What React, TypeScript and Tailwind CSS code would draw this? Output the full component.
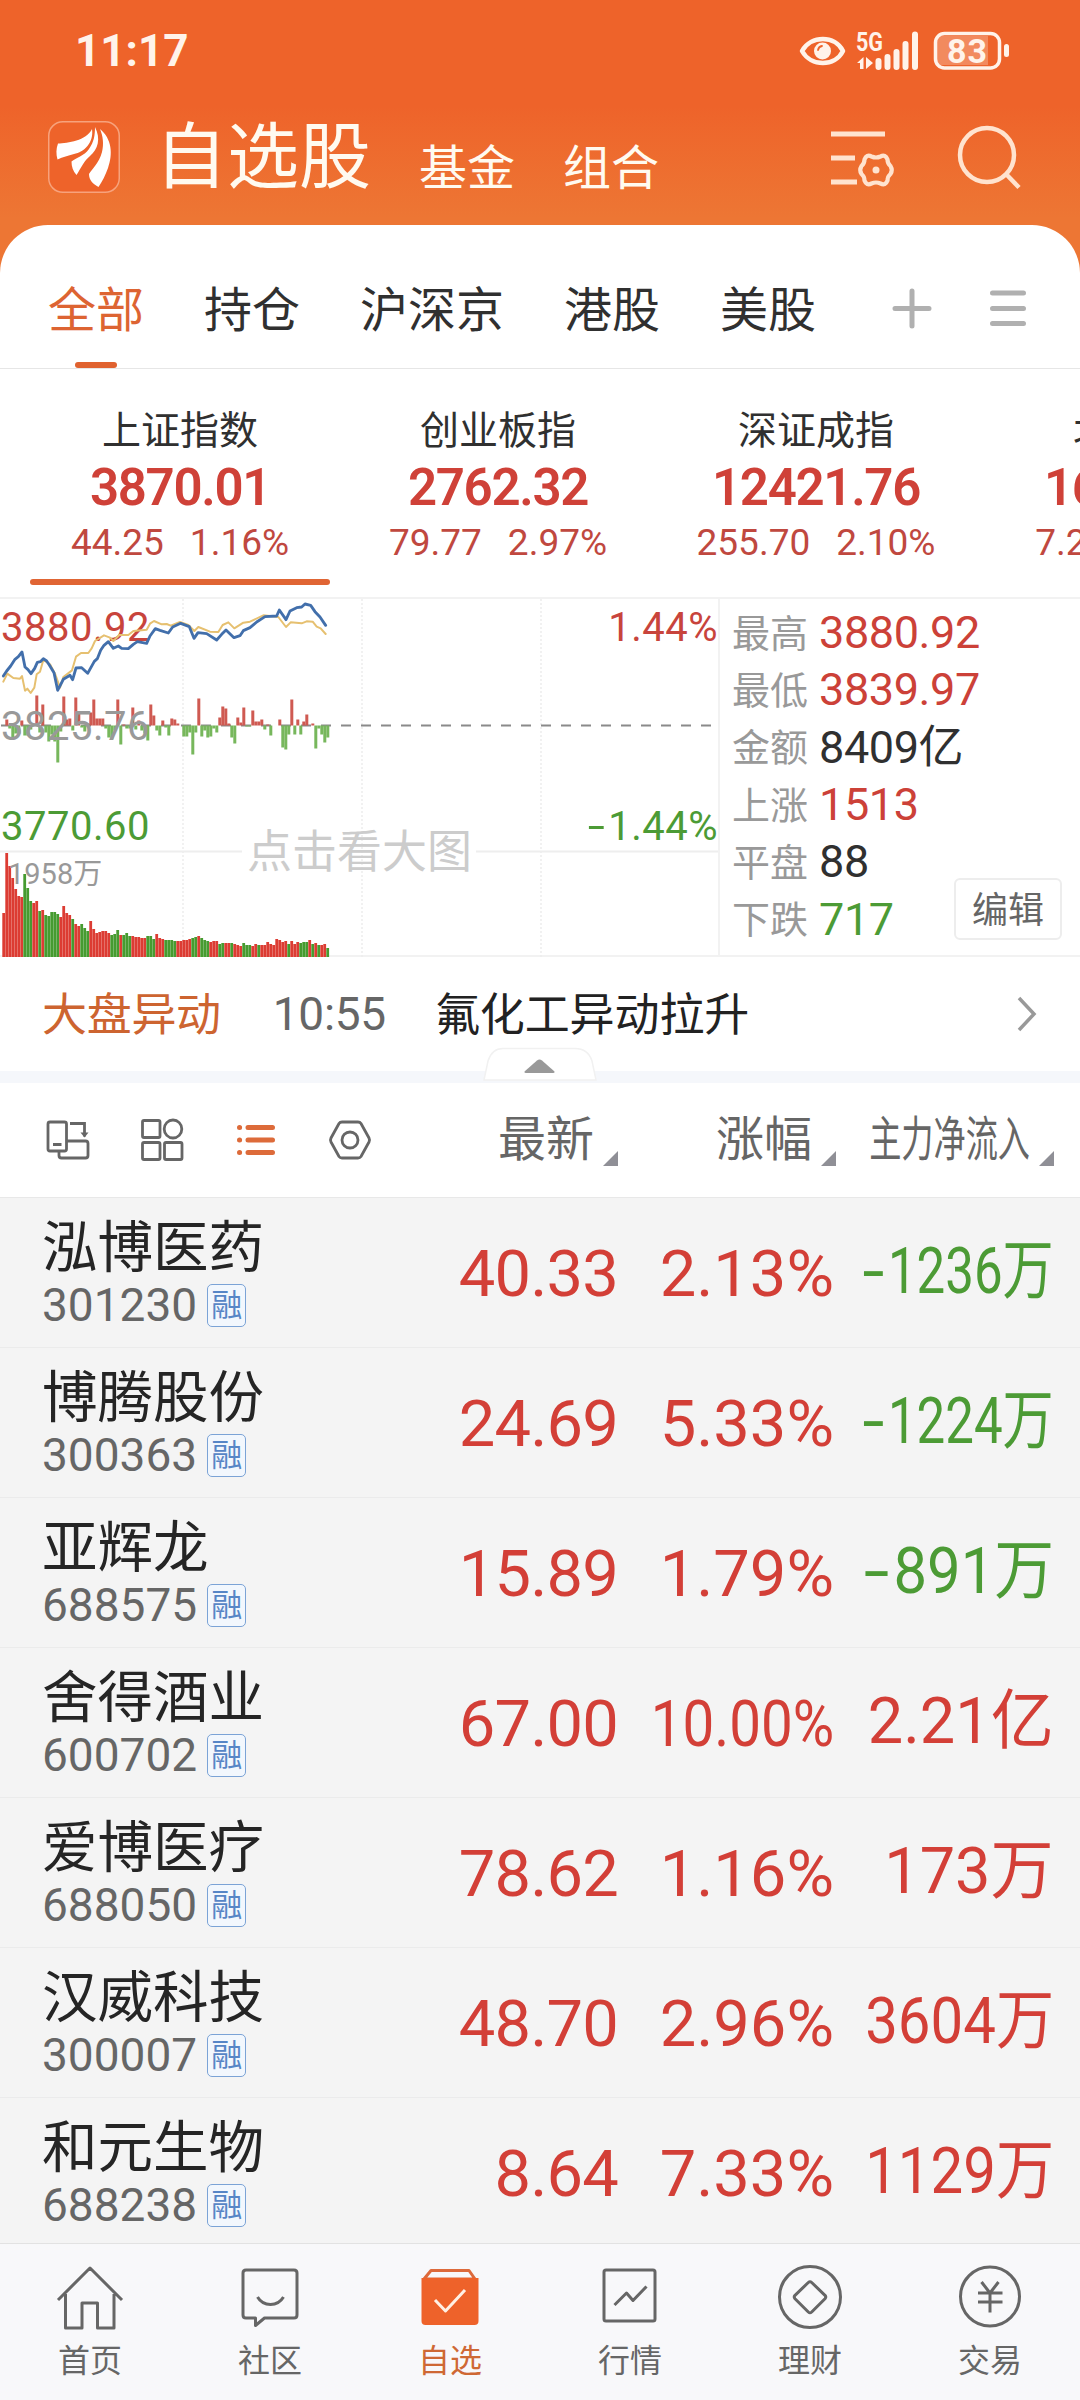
import React from 'react';
import clsx from 'clsx';

const tabs = ['全部', '持仓', '沪深京', '港股', '美股'];

const indexes = [
  { name: '上证指数', value: '3870.01', change: '44.25', pct: '1.16%' },
  { name: '创业板指', value: '2762.32', change: '79.77', pct: '2.97%' },
  { name: '深证成指', value: '12421.76', change: '255.70', pct: '2.10%' },
  { name: '北证50', value: '1600.82', change: '7.27', pct: '0.46%' },
];

const stats = [
  { label: '最高', value: '3880.92', color: 'text-[#cc4138]' },
  { label: '最低', value: '3839.97', color: 'text-[#cc4138]' },
  { label: '金额', value: '8409亿', color: 'text-[#303030]' },
  { label: '上涨', value: '1513', color: 'text-[#cc4138]' },
  { label: '平盘', value: '88', color: 'text-[#303030]' },
  { label: '下跌', value: '717', color: 'text-[#4c9b35]' },
];

const stocks = [
  { name: '泓博医药', code: '301230', price: '40.33', pct: '2.13%', flow: '-1236万', fit: 'scale-x-[0.785]' },
  { name: '博腾股份', code: '300363', price: '24.69', pct: '5.33%', flow: '-1224万', fit: 'scale-x-[0.785]' },
  { name: '亚辉龙', code: '688575', price: '15.89', pct: '1.79%', flow: '-891万', fit: 'scale-x-[0.92]' },
  { name: '舍得酒业', code: '600702', price: '67.00', pct: '10.00%', flow: '2.21亿', fit: 'scale-x-[0.97]' },
  { name: '爱博医疗', code: '688050', price: '78.62', pct: '1.16%', flow: '173万', fit: 'scale-x-[0.97]' },
  { name: '汉威科技', code: '300007', price: '48.70', pct: '2.96%', flow: '3604万', fit: 'scale-x-[0.895]' },
  { name: '和元生物', code: '688238', price: '8.64', pct: '7.33%', flow: '1129万', fit: 'scale-x-[0.895]' },
];

// per-minute volume, r = up, g = down
const volume = [
  44, 104, 91, 79, 68, 61, 60, 83, 69, 56, 54, 56, 46, 47, 42, 41, 45, 45, 43, 40, 51, 44, 42, 38, 33, 31, 33, 29, 26, 36,
  28, 24, 25, 26, 26, 24, 22, 23, 27, 22, 22, 24, 21, 21, 20, 20, 19, 19, 21, 21, 18, 23, 19, 18, 17, 17, 17, 16, 16, 16,
  17, 17, 18, 19, 20, 21, 19, 17, 16, 15, 16, 16, 13, 14, 14, 14, 14, 13, 12, 11, 14, 12, 12, 11, 13, 12, 12, 12, 15, 13,
  12, 18, 17, 15, 16, 13, 16, 13, 15, 14, 15, 15, 17, 13, 14, 12, 12, 13, 9,
];
const volumeDir =
  'rrrrrrrgggrrgrgggggrrrrgrrggg' + 'rrrrrrrgggrgggrrrrrgggrrrggggrrrrrggrgggrrrggrrgrrrgggrrgrrrrrrrrrgrrrgggrgrgrrggrgggggg';

// net money flow around the previous close, index -> signed height
const flow: Record<number, number> = {
  1: 6, 2: -3, 3: -13, 4: -8, 5: -8, 6: 5, 7: -10, 8: -10, 9: -4, 10: 2, 11: 30, 12: -7, 13: 21, 14: -7, 15: -16, 16: -9, 17: -16,
  18: -37, 19: -6, 20: 29, 21: 6, 22: 7, 23: -5, 24: 28, 25: 12, 26: -2, 27: -6, 28: 2, 29: 13, 30: 26, 31: 7, 32: 7, 33: 7,
  34: -3, 35: -12, 36: -14, 37: -5, 38: 26, 39: -19, 40: 1, 41: -3, 42: -3, 43: 18, 44: -4, 45: 5, 46: -5, 47: -8, 48: -15,
  49: 21, 50: 10, 51: -5, 52: -10, 53: 5, 54: -2, 55: -10, 56: 7, 57: 6, 58: 2, 60: -11, 61: -11, 62: -7, 63: -29, 64: -7,
  65: 27, 66: -11, 67: -5, 68: -12, 69: -11, 70: -3, 71: -7, 72: 8, 73: 19, 74: 17, 75: 2, 76: -12, 77: -18, 78: 8, 79: 3,
  80: 18, 81: -1, 82: -1, 83: 15, 84: 4, 85: 4, 86: 6, 87: -4, 88: 1, 89: -10, 92: 6, 93: -22, 94: -24, 95: -9, 96: 26,
  97: -9, 98: 6, 99: -9, 100: 4, 101: 11, 103: 2, 104: -23, 105: -3, 106: -9, 107: -17, 108: -12,
};

const priceLine =
  '10,255 20,240 32,225 45,205 55,197 66,183 75,228 84,236 93,248 104,232 112,214 121,212 130,203 140,210 148,222 162,245 173,298 190,265 210,253 218,266 228,231 245,230 263,247 283,211 292,203 302,178 312,163 325,152 340,172 355,165 365,172 385,173 400,160 412,152 440,157 450,135 466,113 480,118 505,126 518,108 542,97 568,107 582,142 594,125 620,128 650,147 665,130 678,117 702,140 720,134 730,119 750,110 770,93 795,77 830,75 838,57 858,86 870,60 890,50 905,48 915,39 932,43 945,62 960,78 977,103';
const avgLine =
  '10,272 22,248 40,261 60,263 66,255 75,299 82,293 92,306 103,290 110,250 120,242 130,207 150,220 165,248 180,290 190,258 216,238 228,197 243,186 265,186 275,172 285,150 312,133 330,140 340,150 358,132 385,132 400,120 440,116 450,98 462,90 485,100 500,99 512,104 540,93 565,102 583,120 595,108 630,122 655,123 668,102 685,94 703,112 730,95 750,92 790,73 835,78 858,108 872,94 905,97 920,91 938,92 950,107 962,112 977,129';

// the minus sign is drawn wider than the font's hyphen
function Signed({ text }: { text: string }) {
  if (text[0] !== '-') return <>{text}</>;
  return (
    <>
      <span className="mr-[0.07em] inline-block origin-right scale-x-[1.55]">-</span>
      {text.slice(1)}
    </>
  );
}

function StatusBar() {
  return (
    <div className="flex h-[102px] items-center justify-between pl-[75px] pr-[70px] text-[#fff3ea]">
      <span className="text-[44px] leading-none font-bold">11:17</span>
      <svg width="212" height="54" viewBox="798 24 212 54" fill="none" stroke="#fff3ea">
        <path d="M802 51C811 35 835 35 843 51C835 67 811 67 802 51Z" strokeWidth="4.5" strokeLinejoin="round" />
        <circle cx="822.5" cy="51" r="8.5" fill="#fff3ea" stroke="none" />
        <path d="M818 50a5 5 0 0 1 4-4" stroke="#ee632a" strokeWidth="1.8" strokeLinecap="round" />
        <text x="856" y="50.500" fill="#fff3ea" stroke="none" fontSize="25" fontWeight="700" textLength="27" lengthAdjust="spacingAndGlyphs">5G</text>
        <path d="M863.500 57v12h-3.500v-6h-3zM866 57v12l7-6z" fill="#fff3ea" stroke="none" />
        <path d="M878.500 61v6M887.500 57v10M896.500 52v15M905.500 44v23M915 34.500v32.500" strokeWidth="6" strokeLinecap="round" />
        <path d="M941 36h47v29h-47q-5 0-5-5V41q0-5 5-5z" fill="#f28a5e" stroke="none" />
        <rect x="935.500" y="33.500" width="64" height="34.500" rx="9" strokeWidth="3.500" />
        <path d="M1006.500 46.500v8" strokeWidth="5" strokeLinecap="round" />
        <text x="947" y="63" fill="#fff3ea" stroke="none" fontSize="34" fontWeight="700" textLength="40">83</text>
      </svg>
    </div>
  );
}

function TitleBar() {
  return (
    <div className="flex h-[107px] items-center pl-12 pr-[56px] text-[#fffaf0]">
      <svg className="mt-[3px]" width="72" height="72" viewBox="0 0 72 72">
        <rect x="0.750" y="0.750" width="70.500" height="70.500" rx="14" fill="#ee632a" stroke="#f7a27c" strokeWidth="1.500" />
        <path d="M44 8C46 22 36 31 26 33C20 34.500 15 36 9.500 38.500C8 33 8 28 10 22.500C20 22 38 20 44 8Z" fill="#fff" />
        <path d="M47 6C53 18 50 28 42 35C36 40 33 47 28.500 54C25 50 23.500 46 23.500 40.500C28 37 36 35 41 28C46 21 47 14 47 6Z" fill="#fff" />
        <path d="M52 8C64 18 65 33 60 47C57.500 54 54.500 60 50.500 66C45 63 41 59 41 53C44 48 51 42 54 31C56 23 55 15 52 8Z" fill="#fff" />
      </svg>
      <div className="ml-[35px] flex items-end pt-[5px] leading-none">
        <span className="text-[72px] leading-none">自选股</span>
        <span className="mb-[1px] ml-12 text-5xl leading-none">基金</span>
        <span className="mb-[1px] ml-12 text-5xl leading-none">组合</span>
      </div>
      <svg className="ml-auto" width="196" height="72" viewBox="828 119 196 72" fill="none" stroke="#ffe3cf">
        <path d="M831 133h54M831 157h24M831 181h26" strokeWidth="5" />
        <path
          d="M871.500 155.500Q876 157.500 880.500 155.500Q885.500 153 887.500 158.500Q887.500 162.500 890.500 165Q893 169 890.500 173Q887.500 175.500 887.500 179.500Q885.500 185 880.500 182.500Q876 180.500 871.500 182.500Q866.500 185 864.500 179.500Q864.500 175.500 861.500 173Q859 169 861.500 165Q864.500 162.500 864.500 158.500Q866.500 153 871.500 155.500Z"
          strokeWidth="4.200"
        />
        <circle cx="876" cy="169" r="3.500" fill="#ffe3cf" stroke="none" />
        <ellipse cx="987" cy="154" rx="27" ry="27" strokeWidth="4.500" />
        <path d="M1006 173l13 13.500" strokeWidth="4.500" />
      </svg>
    </div>
  );
}

function Tabs() {
  return (
    <div className="flex h-36 border-b border-[#e6e6e6] pl-12 pr-[54px] text-5xl leading-none text-[#303030]">
      <div className="flex gap-[60px]">
        {tabs.map((tab, i) => (
          <div key={tab} className={clsx('flex h-full flex-col items-center justify-between pt-[62px]', i === 0 && 'text-[#dd6432]')}>
            <span>{tab}</span>
            {i === 0 && <span className="h-1.5 w-[42px] rounded-full bg-[#e0622f]" />}
          </div>
        ))}
      </div>
      <svg className="mt-[62px] ml-auto" width="136" height="42" viewBox="890 287 136 42" stroke="#b0b0b0" strokeWidth="5" strokeLinecap="round">
        <path d="M895 308.500h34M912 291v35M992.500 293h31M992.500 308.500h31M992.500 323.500h31" />
      </svg>
    </div>
  );
}

function IndexStrip() {
  return (
    <div className="flex h-[228px] overflow-hidden pl-[21px]">
      {indexes.map((item, i) => (
        <div key={item.name} className="flex w-[318px] shrink-0 flex-col items-center pt-[42px]">
          <span className="text-[39px] leading-10 text-[#303030]">{item.name}</span>
          <span className="mt-[7px] text-[51px] leading-[60px] font-semibold tracking-[-1.3px] text-[#cf4138]">{item.value}</span>
          <div className="mt-[3px] flex gap-[26px] text-[37px] leading-11 text-[#c0483f]">
            <span>{item.change}</span>
            <span>{item.pct}</span>
          </div>
          {i === 0 && <span className="mt-3.5 h-1.5 w-[300px] rounded-full bg-[#e06534]" />}
        </div>
      ))}
    </div>
  );
}

function MinuteChart() {
  return (
    <div className="relative w-[720px] border-r-2 border-[#f2f2f2] text-[40px] leading-none">
      <svg className="absolute top-0 left-0" width="718" height="358" viewBox="0 0 718 358">
        <path d="M183 0V358M362 0V358M541 0V358" stroke="#ededed" strokeWidth="1.500" strokeDasharray="2 2" />
        <path d="M0 252.500H242M476 252.500H718" stroke="#eeeeee" strokeWidth="2" />
        <path d="M1 126.500H718" stroke="#8a8a8a" strokeWidth="2" strokeDasharray="10 10" />
        {Object.entries(flow).map(([i, h]) => (
          <rect key={i} x={2.3 + Number(i) * 3} y={h > 0 ? 126.5 - h : 126.5} width="3" height={Math.abs(h)} fill={h > 0 ? '#cf5a52' : '#77b75c'} />
        ))}
        {volume.map((h, i) => (
          <rect key={i} x={2.3 + i * 3} y={358 - h} width="2.800" height={h} fill={volumeDir[i] === 'r' ? '#dc3c33' : '#469b30'} />
        ))}
      </svg>
      <span className="absolute top-[9px] left-px tracking-[0.5px] text-[#c8443c]">3880.92</span>
      <span className="absolute top-[108px] left-px tracking-[0.5px] text-[#999]">3825.76</span>
      <span className="absolute top-[208px] left-px tracking-[0.5px] text-[#4c9b35]">3770.60</span>
      <span className="absolute top-[261px] left-2 text-[29px] text-[#999]">1958万</span>
      <span className="absolute top-[9px] right-0 tracking-[0.5px] text-[#c8443c]">1.44%</span>
      <span className="absolute top-[208px] right-0 tracking-[0.5px] text-[#4c9b35]"><Signed text="-1.44%" /></span>
      <span className="absolute top-[231px] left-[247px] text-[45px] text-[#ccc]">点击看大图</span>
      <svg className="absolute top-0 left-0" width="718" height="130" viewBox="0 24 2154 390" fill="none" strokeLinejoin="round" strokeLinecap="round">
        <polyline points={avgLine} stroke="#e6c070" strokeWidth="6" />
        <polyline points={priceLine} stroke="#426fab" strokeWidth="8.500" />
      </svg>
    </div>
  );
}

function MarketPanel() {
  return (
    <div className="flex h-[360px] border-y-2 border-[#f2f2f2]">
      <MinuteChart />
      <div className="relative flex-1 pt-[5px] pl-3">
        {stats.map((s) => (
          <div key={s.label} className="flex h-[57.3px] items-center gap-[11px]">
            <span className="pt-[2px] text-[38px] leading-none text-[#999]">{s.label}</span>
            <span className={clsx('text-[45px] leading-none tracking-[-0.4px]', s.color)}>{s.value}</span>
          </div>
        ))}
        <button className="absolute right-[18px] bottom-[15px] h-[62px] w-[108px] rounded-md border-2 border-[#ededed] bg-white pt-[3px] text-4xl leading-none text-[#666]">
          编辑
        </button>
      </div>
    </div>
  );
}

function NewsRow() {
  return (
    <div className="relative">
      <div className="flex h-[114px] items-center pr-[43px] pl-[42px] text-[45px] leading-none">
        <span className="pt-[3px] tracking-[-0.3px] text-[#cd6430]">大盘异动</span>
        <span className="ml-[52px] text-[46px] tracking-[-0.3px] text-[#666]">10:55</span>
        <span className="ml-[49px] pt-[3px] tracking-[-0.1px] text-[#222]">氟化工异动拉升</span>
        <svg className="ml-auto" width="20" height="36" viewBox="0 0 20 36" fill="none" stroke="#999" strokeWidth="3.500">
          <path d="M2 2l15 16L2 34" />
        </svg>
      </div>
      <div className="h-3 bg-[#f5f7fb]" />
      <svg className="absolute bottom-0.5 left-[483px]" width="114" height="34" viewBox="0 0 114 34">
        <path d="M1 33L5 14Q9 1.500 20 1.500H92Q105 1.500 109 14L113 33Z" fill="#fff" stroke="#f1f1f1" strokeWidth="1.500" />
        <path d="M41.500 24.500L54 13.500Q56.500 11.500 59 13.500L71.500 24.500Q72 26 70 26H43Q41 26 41.500 24.500Z" fill="#999" />
      </svg>
    </div>
  );
}

function HeaderCell({ label, className }: { label: string; className?: string }) {
  return (
    <div className="flex h-full items-center justify-end">
      <span className={clsx('origin-right text-5xl leading-none whitespace-nowrap', className)}>{label}</span>
      <svg className="mt-[37px] ml-[9px] shrink-0" width="15" height="15" viewBox="0 0 15 15">
        <path d="M15 0V15H0Z" fill="#8f8f96" />
      </svg>
    </div>
  );
}

function ListHeader() {
  return (
    <div className="grid h-[115px] grid-cols-[618px_218px_218px] border-b border-[#e8e8e8] text-[#666]">
      <div className="flex items-center">
        <svg className="ml-[45px]" width="330" height="46" viewBox="45 1117 330 46" fill="none" stroke="#666" strokeWidth="2.800">
          <rect x="48" y="1122" width="18.500" height="29" rx="2" />
          <path d="M53 1144.500h8.500M70 1123.500h14.500v13M66.500 1141h19q2.500 0 2.500 2.500v12q0 2.500-2.500 2.500H61.500q-2.500 0-2.500-2.500v-4.500" />
          <path d="M80.500 1132.500h8l-4 5z" fill="#666" stroke="none" />
          <rect x="142.500" y="1120.500" width="17.500" height="17" rx="1.500" />
          <rect x="142.500" y="1142.500" width="17.500" height="17" rx="1.500" />
          <rect x="164.500" y="1142.500" width="17.500" height="17" rx="1.500" />
          <ellipse cx="173" cy="1129" rx="8.800" ry="9" />
          <g stroke="#dd6b3a" strokeWidth="5" strokeLinecap="round">
            <path d="M248 1127.500h24.500M248 1140h24.500M248 1152.500h24.500M239.500 1127.500h.1M239.500 1140h.1M239.500 1152.500h.1" />
          </g>
          <path d="M342 1122h16q2 0 3 1.500l8 14.500q1 2 0 4l-8 14.500q-1 1.500-3 1.500h-16q-2 0-3-1.500l-8-14.500q-1-2 0-4l8-14.500q1-1.500 3-1.500z" />
          <circle cx="350" cy="1140" r="8" />
        </svg>
        <div className="ml-auto h-full"><HeaderCell label="最新" /></div>
      </div>
      <HeaderCell label="涨幅" />
      <HeaderCell label="主力净流入" className="scale-x-[0.67]" />
    </div>
  );
}

function StockRow({ stock }: { stock: (typeof stocks)[number] }) {
  return (
    <div className="grid h-[150px] grid-cols-[618px_218px_218px] border-b border-[#ebebeb] text-[65px] leading-none text-[#d33f37]">
      <div className="flex items-center justify-between pl-[42px]">
        <div>
          <div className="pt-[2px] text-[55.5px] leading-[56px] text-[#252525]">{stock.name}</div>
          <div className="mt-[7px] flex items-center gap-2.5 text-[46px] leading-[42px] text-[#666]">
            <span>{stock.code}</span>
            <span className="flex h-[43px] w-[39px] items-center justify-center rounded-[5px] border-[1.5px] border-[#7ba3d6] bg-[#f2f7fd] text-[31px] leading-none text-[#5786c6]">
              融
            </span>
          </div>
        </div>
        <span className="pt-[3px] tracking-[-0.8px]">{stock.price}</span>
      </div>
      <span className={clsx('origin-right self-center pt-[3px] pr-[2px] text-right', stock.pct.length > 5 && 'scale-x-[0.87]')}>{stock.pct}</span>
      <div className={clsx('flex items-center justify-end pb-[2px] whitespace-nowrap', stock.flow[0] === '-' && 'text-[#4c9b35]')}>
        <span className={clsx('shrink-0 origin-right', stock.fit)}><Signed text={stock.flow} /></span>
      </div>
    </div>
  );
}

const navItems = [
  {
    label: '首页',
    icon: <path d="M2 37L34 5l32 32M9.500 31v34H26V40h15.500v25H58V31" />,
  },
  {
    label: '社区',
    icon: (
      <>
        <path d="M10 7H58q3 0 3 3V52q0 3-3 3H28.500l-9 7.500V55H10q-3 0-3-3V10q0-3 3-3z" />
        <path d="M21.500 34c6 10 20 10 26 0" />
      </>
    ),
  },
  {
    label: '自选',
    icon: (
      <>
        <path d="M15 7.500H53l6 8.500H8z" stroke="#dd6a3b" />
        <path d="M5.500 15H62.500V58q0 4-4 4H9.500q-4 0-4-4z" fill="#ee622a" stroke="none" />
        <path d="M19 37l10.500 11L49 27" stroke="#fff0e4" />
      </>
    ),
  },
  {
    label: '行情',
    icon: (
      <>
        <rect x="8" y="7" width="51" height="51" rx="2" />
        <path d="M18.500 42l12-12 6.500 7.500 13.500-14" />
      </>
    ),
  },
  {
    label: '理财',
    icon: (
      <>
        <circle cx="34" cy="34" r="30.500" />
        <path d="M32.300 19.500Q34 18 35.700 19.500L49 32.300Q50.500 34 49 35.700L35.700 49Q34 50.500 32.300 49L19 35.700Q17.500 34 19 32.300z" />
      </>
    ),
  },
  {
    label: '交易',
    icon: (
      <>
        <circle cx="34" cy="33.500" r="29.500" />
        <path d="M25.500 19L34 30l8.500-11M22 30h24.500M22 39h24.500M34 30v19.500" />
      </>
    ),
  },
];

function BottomNav() {
  return (
    <nav className="grid h-[157px] shrink-0 grid-cols-6 border-t border-[#e2e2e2] bg-[#f8f8fa] text-[#666]">
      {navItems.map((item) => (
        <a key={item.label} className="flex flex-col items-center pt-[19px]">
          <svg width="68" height="68" viewBox="0 0 68 68" fill="none" stroke="#666" strokeWidth="3" strokeLinejoin="round">
            {item.icon}
          </svg>
          <span className={clsx('mt-3.5 text-[32px] leading-none', item.label === '自选' && 'text-[#cf6834]')}>{item.label}</span>
        </a>
      ))}
    </nav>
  );
}

export default function App() {
  return (
    <div className="flex h-[2400px] w-[1080px] flex-col overflow-hidden bg-white font-['Roboto','Noto_Sans_CJK_SC',sans-serif]">
      <header className="-mb-[55px] h-[280px] shrink-0 bg-linear-to-b from-[#ee632a] from-38% to-[#ed7634] to-78%">
        <StatusBar />
        <TitleBar />
      </header>
      <div className="relative shrink-0 rounded-t-[48px] bg-white">
        <Tabs />
        <IndexStrip />
        <MarketPanel />
        <NewsRow />
        <ListHeader />
      </div>
      <div className="min-h-0 flex-1 overflow-hidden bg-[#f4f4f4]">
        {stocks.map((s) => (
          <StockRow key={s.code} stock={s} />
        ))}
      </div>
      <BottomNav />
    </div>
  );
}
